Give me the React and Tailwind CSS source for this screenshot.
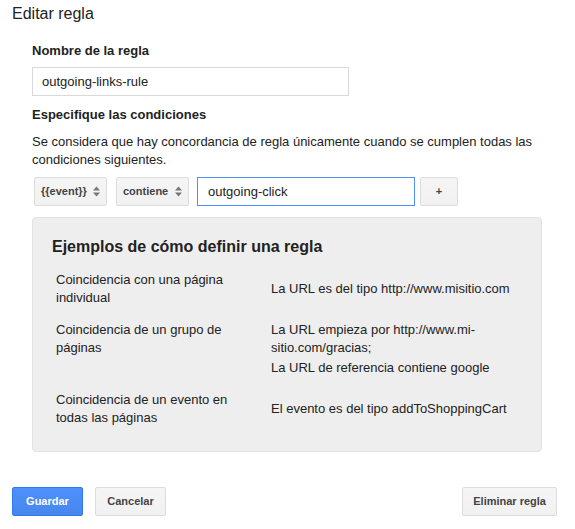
import React from "react"

function SortArrows() {
  return (
    <svg width="7" height="11" viewBox="0 0 7 11" className="shrink-0">
      <polygon points="0,4.5 3.5,0.5 7,4.5" fill="#777" />
      <polygon points="0,6.5 7,6.5 3.5,10.5" fill="#777" />
    </svg>
  )
}

function SelectButton({ label }) {
  return (
    <div className="w-[73px] h-[29px] flex items-center justify-between pl-[6px] pr-[6px] border border-[#dcdcdc] rounded-[2px] bg-linear-to-b from-[#f5f5f5] to-[#f1f1f1] text-[11px] font-bold text-[#444]">
      <span>{label}</span>
      <SortArrows />
    </div>
  )
}

const examples = [
  {
    kind: "Coincidencia con una página individual",
    rules: ["La URL es del tipo http://www.misitio.com"],
  },
  {
    kind: "Coincidencia de un grupo de páginas",
    rules: [
      "La URL empieza por http://www.mi-sitio.com/gracias;",
      "La URL de referencia contiene google",
    ],
  },
  {
    kind: "Coincidencia de un evento en todas las páginas",
    rules: ["El evento es del tipo addToShoppingCart"],
  },
]

export default function App() {
  return (
    <div className="w-[575px] h-[529px] bg-white text-[#222] font-['Liberation_Sans',Arial,sans-serif] overflow-hidden">
      <div className="pl-3 pt-[4px] text-[16px] leading-[20px]">Editar regla</div>

      <div className="pl-8 pr-[33px]">
        <div className="mt-[18px] text-[13px] leading-[18px] font-bold">Nombre de la regla</div>
        <div className="mt-[7px] w-[317px] h-[29px] border border-[#d9d9d9] flex items-center pl-[9px] text-[13px]">
          outgoing-links-rule
        </div>

        <div className="mt-[10px] text-[13px] leading-[18px] font-bold">Especifique las condiciones</div>
        <p className="mt-[9px] text-[13px] leading-[18px]">
          Se considera que hay concordancia de regla únicamente cuando se cumplen todas las condiciones siguientes.
        </p>

        <div className="mt-[8px] flex items-center">
          <div className="ml-[2px]">
            <SelectButton label="{{event}}" />
          </div>
          <div className="ml-[9px]">
            <SelectButton label="contiene" />
          </div>
          <div className="ml-[8px] w-[218px] h-[29px] border border-[#4d90fe] flex items-center pl-[10px] text-[13px]">
            outgoing-click
          </div>
          <button className="ml-[5px] w-[38px] h-[29px] border border-[#dcdcdc] rounded-[2px] bg-linear-to-b from-[#f5f5f5] to-[#f1f1f1] text-[11px] font-bold text-[#444] flex items-center justify-center">
            +
          </button>
        </div>

        <div className="mt-[11px] h-[235px] border border-[#e2e2e2] rounded-[4px] bg-[#eeeeee] pl-[19px] pr-[20px] pt-[19px] pb-[17px] text-[#222]">
          <div className="text-[16px] leading-[20px] font-bold">Ejemplos de cómo definir una regla</div>
          <div className="mt-[7px] pl-1">
            {examples.map((ex) => (
              <div key={ex.kind} className="grid grid-cols-[215px_1fr] items-center py-[7px] text-[13px] leading-[18px]">
                <div className={ex.rules.length > 1 ? "pr-[15px] self-start" : "pr-[15px]"}>{ex.kind}</div>
                <div>
                  {ex.rules.map((r, i) => (
                    <p key={r} className={i > 0 ? "mt-[2px]" : ""}>
                      {r}
                    </p>
                  ))}
                </div>
              </div>
            ))}
          </div>
        </div>
      </div>

      <div className="mt-[35px] pl-3 pr-[18px] flex justify-between">
        <div className="flex gap-3">
          <button className="h-[29px] min-w-[71px] px-[10px] border border-[#3079ed] rounded-[2px] bg-linear-to-b from-[#4d90fe] to-[#4787ed] text-white text-[11px] font-bold">
            Guardar
          </button>
          <button className="h-[29px] min-w-[71px] px-[10px] border border-[#dcdcdc] rounded-[2px] bg-linear-to-b from-[#f5f5f5] to-[#f1f1f1] text-[#444] text-[11px] font-bold">
            Cancelar
          </button>
        </div>
        <button className="h-[29px] min-w-[71px] px-[10px] border border-[#dcdcdc] rounded-[2px] bg-linear-to-b from-[#f5f5f5] to-[#f1f1f1] text-[#444] text-[11px] font-bold">
          Eliminar regla
        </button>
      </div>
    </div>
  )
}
